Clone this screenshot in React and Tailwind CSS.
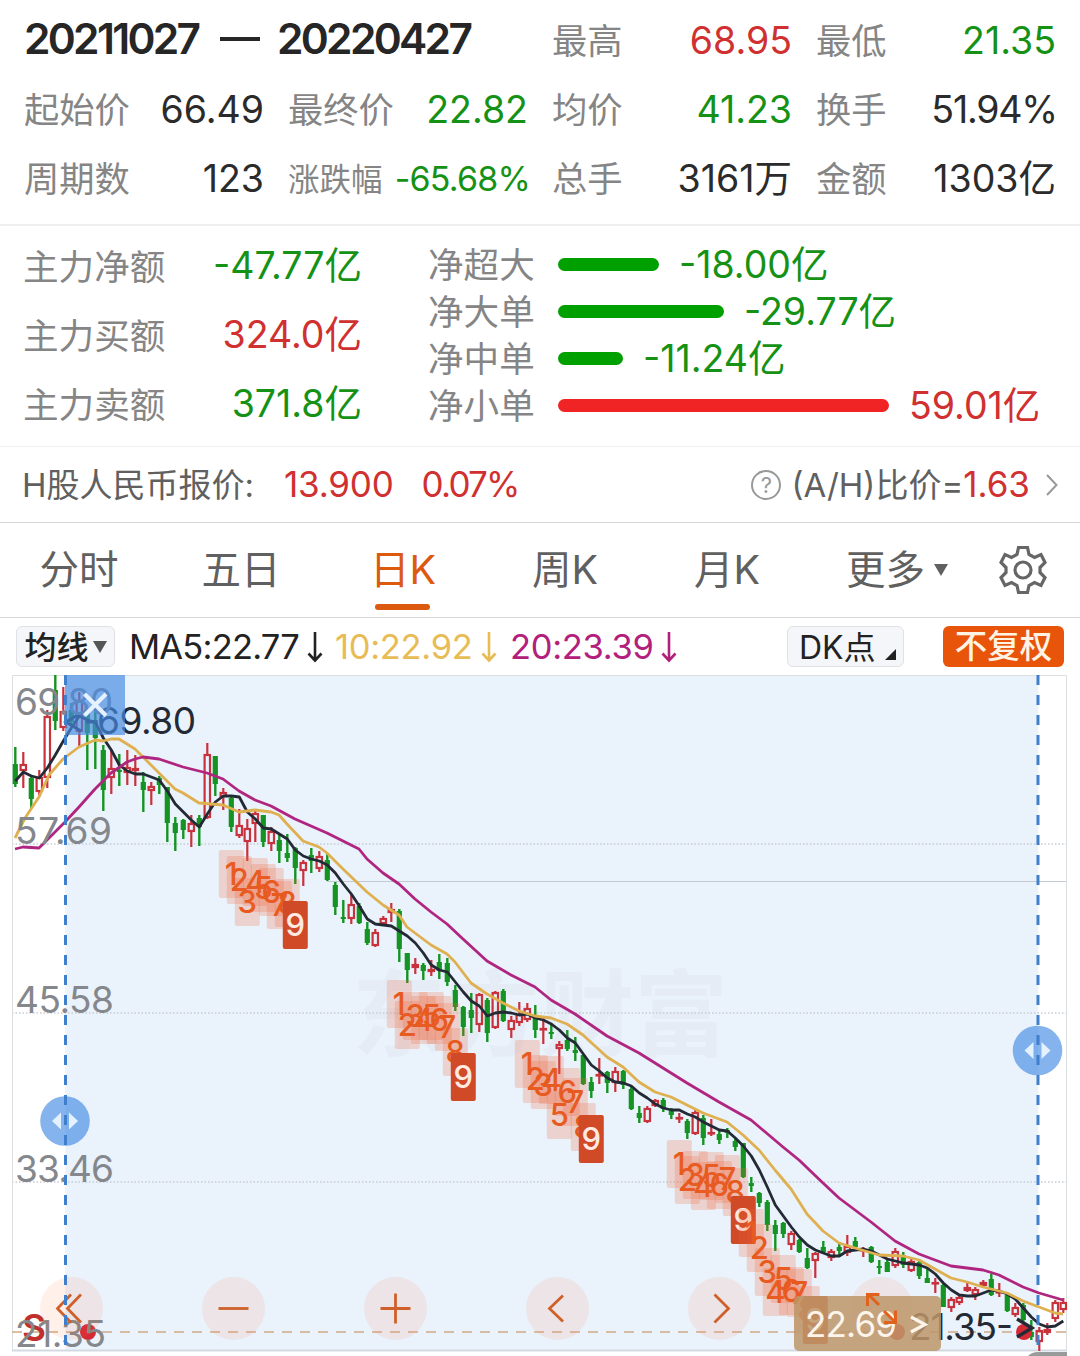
import React from 'react'

const UP = '#c8323c'
const DOWN = '#159423'

const summary = [
  { label: '起始价', value: '66.49', color: 'text-[#2b2b2b]' },
  { label: '最终价', value: '22.82', color: 'text-[#159215]' },
  { label: '均价', value: '41.23', color: 'text-[#159215]' },
  { label: '换手', value: '51.94%', color: 'text-[#2b2b2b] tracking-[-1.2px] -mr-[1px]' },
  { label: '周期数', value: '123', color: 'text-[#2b2b2b]' },
  { label: '涨跌幅', value: '-65.68%', color: 'text-[#159215] tracking-[-0.8px] -mr-[2px]', small: true },
  { label: '总手', value: '3161万', color: 'text-[#2b2b2b]' },
  { label: '金额', value: '1303亿', color: 'text-[#2b2b2b]' },
]

const mainFlow = [
  { label: '主力净额', value: '-47.77亿', color: 'text-[#159215]' },
  { label: '主力买额', value: '324.0亿', color: 'text-[#d03030]' },
  { label: '主力卖额', value: '371.8亿', color: 'text-[#159215]' },
]

const netFlow = [
  { label: '净超大', value: '-18.00亿', width: 101, bar: 'bg-[#00a000]', color: 'text-[#159215]' },
  { label: '净大单', value: '-29.77亿', width: 166, bar: 'bg-[#00a000]', color: 'text-[#159215]' },
  { label: '净中单', value: '-11.24亿', width: 65, bar: 'bg-[#00a000]', color: 'text-[#159215]' },
  { label: '净小单', value: '59.01亿', width: 331, bar: 'bg-[#f02424]', color: 'text-[#d03030]' },
]

const tabs = ['分时', '五日', '日K', '周K', '月K']

// direction (1 up, 0 down), high, low, body top, body bottom
const candles = [
  [0, 747, 787, 764, 784], [1, 752, 788, 764, 771], [0, 777, 808, 778, 799], [1, 770, 797, 777, 792],
  [1, 710, 788, 716, 778], [0, 675, 730, 690, 721], [1, 687, 731, 711, 728], [0, 703, 725, 710, 722],
  [1, 692, 748, 700, 732], [0, 713, 770, 713, 733], [0, 710, 769, 720, 738], [0, 745, 811, 750, 790],
  [1, 751, 794, 768, 778], [0, 754, 786, 770, 772], [1, 750, 785, 767, 773], [1, 755, 786, 768, 771],
  [0, 772, 812, 782, 790], [1, 782, 805, 786, 791], [0, 776, 794, 778, 785], [0, 787, 842, 787, 823],
  [0, 817, 851, 823, 833], [0, 819, 839, 820, 830], [1, 815, 847, 823, 832], [0, 815, 846, 818, 827],
  [1, 743, 819, 754, 818], [0, 756, 796, 756, 784], [1, 788, 810, 792, 797], [0, 795, 832, 798, 827],
  [1, 809, 838, 825, 836], [1, 819, 861, 828, 842], [1, 811, 842, 813, 824], [0, 815, 847, 815, 842],
  [1, 827, 851, 831, 844], [0, 835, 863, 840, 851], [0, 834, 862, 853, 858], [0, 847, 884, 848, 868],
  [1, 860, 886, 862, 871], [0, 848, 873, 855, 861], [1, 851, 872, 856, 869], [0, 854, 881, 860, 880],
  [0, 882, 915, 885, 907], [0, 900, 923, 917, 919], [1, 895, 924, 904, 919], [0, 903, 924, 906, 923],
  [0, 922, 945, 929, 943], [1, 929, 947, 932, 946], [1, 916, 925, 918, 924], [1, 903, 922, 909, 913],
  [0, 909, 962, 911, 949], [0, 953, 983, 953, 970], [1, 958, 974, 964, 968], [0, 963, 980, 965, 971],
  [1, 960, 976, 969, 972], [0, 954, 979, 962, 971], [0, 958, 986, 963, 982], [0, 985, 1011, 990, 1007],
  [0, 1006, 1036, 1007, 1027], [0, 993, 1033, 1010, 1018], [1, 993, 1032, 994, 1025], [0, 998, 1042, 1000, 1033],
  [1, 991, 1029, 992, 1028], [0, 989, 1022, 991, 1021], [1, 1016, 1038, 1020, 1030], [1, 1002, 1026, 1014, 1023],
  [1, 1003, 1022, 1008, 1020], [0, 1005, 1038, 1017, 1030], [1, 1017, 1044, 1028, 1030], [0, 1023, 1039, 1032, 1034],
  [1, 1041, 1074, 1044, 1049], [0, 1030, 1051, 1040, 1049], [0, 1037, 1061, 1050, 1053], [0, 1054, 1085, 1055, 1084],
  [0, 1077, 1098, 1082, 1091], [1, 1058, 1084, 1074, 1076], [0, 1071, 1093, 1072, 1083], [1, 1067, 1092, 1071, 1083],
  [0, 1070, 1089, 1071, 1085], [0, 1087, 1110, 1089, 1109], [0, 1106, 1123, 1113, 1118], [1, 1106, 1123, 1108, 1122],
  [1, 1099, 1107, 1100, 1106], [0, 1098, 1112, 1100, 1109], [0, 1108, 1119, 1111, 1115], [1, 1113, 1123, 1117, 1119],
  [0, 1119, 1139, 1121, 1133], [1, 1110, 1135, 1112, 1134], [0, 1115, 1145, 1118, 1138], [1, 1119, 1136, 1132, 1133],
  [0, 1131, 1144, 1134, 1140], [0, 1128, 1138, 1130, 1133], [0, 1138, 1151, 1141, 1147], [0, 1143, 1178, 1143, 1177],
  [0, 1177, 1192, 1183, 1186], [0, 1192, 1207, 1193, 1203], [0, 1200, 1231, 1202, 1225], [0, 1220, 1251, 1225, 1234],
  [0, 1222, 1238, 1223, 1234], [1, 1231, 1250, 1233, 1245], [0, 1239, 1253, 1240, 1252], [0, 1248, 1269, 1258, 1268],
  [1, 1252, 1278, 1253, 1261], [0, 1241, 1253, 1247, 1252], [1, 1249, 1261, 1251, 1258], [0, 1242, 1257, 1247, 1251],
  [1, 1235, 1256, 1246, 1253], [0, 1237, 1248, 1241, 1247], [1, 1247, 1257, 1249, 1251], [0, 1246, 1263, 1247, 1262],
  [0, 1260, 1274, 1266, 1268], [0, 1258, 1272, 1262, 1272], [1, 1248, 1268, 1251, 1266], [0, 1252, 1268, 1255, 1265],
  [1, 1258, 1272, 1261, 1271], [0, 1261, 1279, 1262, 1276], [0, 1268, 1283, 1278, 1283], [1, 1278, 1293, 1282, 1284],
  [0, 1284, 1307, 1285, 1307], [1, 1297, 1312, 1299, 1308], [1, 1294, 1305, 1297, 1303], [1, 1281, 1292, 1287, 1291],
  [1, 1287, 1300, 1289, 1295], [1, 1280, 1288, 1282, 1286], [0, 1274, 1296, 1279, 1295], [1, 1283, 1297, 1291, 1293],
  [0, 1293, 1312, 1295, 1311], [1, 1303, 1317, 1307, 1315], [0, 1303, 1322, 1305, 1320], [0, 1320, 1340, 1332, 1337],
  [1, 1327, 1351, 1330, 1342], [1, 1323, 1335, 1329, 1333], [1, 1300, 1322, 1302, 1319], [1, 1298, 1313, 1302, 1310],
]

const ma5 = [
  781, 772, 776, 778, 768, 755, 741, 728, 716, 720, 722, 738, 750, 765, 771, 774, 774, 777, 780, 791, 804, 812, 820, 827,
  814, 802, 796, 796, 797, 812, 819, 828, 829, 834, 839, 850, 856, 859, 861, 865, 873, 884, 894, 906, 919, 924, 925, 926,
  931, 936, 943, 953, 965, 970, 972, 982, 992, 1001, 1006, 1016, 1013, 1012, 1013, 1015, 1014, 1018, 1020, 1024, 1030,
  1038, 1043, 1054, 1065, 1071, 1078, 1082, 1083, 1086, 1093, 1098, 1104, 1108, 1110, 1110, 1114, 1117, 1122, 1126, 1130,
  1131, 1138, 1146, 1156, 1170, 1187, 1205, 1216, 1227, 1237, 1245, 1250, 1253, 1256, 1256, 1251, 1250, 1249, 1251, 1255,
  1259, 1261, 1263, 1264, 1265, 1268, 1274, 1283, 1290, 1295, 1296, 1296, 1293, 1290, 1291, 1294, 1299, 1308, 1317, 1324,
  1327, 1326, 1321,
]

const ma10 =
  '15,838 25,818 39,797 49,775 63,759 79,747 95,740 103,741 111,739 119,739 135,749 151,765 175,789 183,793 199,803 223,805 239,812 255,810 271,812 279,815 287,824 303,841 319,847 327,853 343,869 367,892 383,905 399,915 407,927 431,945 447,954 455,962 471,983 487,994 503,1003 519,1011 535,1016 551,1018 567,1024 583,1035 607,1057 623,1067 639,1082 655,1092 671,1097 687,1105 703,1113 727,1122 743,1135 759,1150 775,1170 791,1189 807,1214 823,1231 839,1243 855,1248 879,1255 903,1256 919,1260 935,1269 951,1278 967,1282 983,1287 1007,1293 1023,1301 1039,1307 1055,1313 1063,1314'

const ma20 =
  '15,849 23,847 39,848 47,840 65,822 79,807 95,789 111,773 127,762 135,759 143,757 159,759 183,767 207,773 223,779 239,791 255,800 271,806 295,819 327,833 359,849 367,859 383,873 399,884 415,899 431,912 447,924 463,939 487,961 511,975 535,987 551,1000 575,1014 607,1036 639,1053 663,1068 687,1083 719,1102 751,1120 783,1147 799,1160 823,1183 839,1198 871,1222 895,1241 919,1254 935,1260 951,1266 983,1270 999,1275 1023,1287 1039,1293 1063,1300'

// nine-count sequences: index of the first candle, top of each box
const sequences = [
  { start: 27, tops: [850, 856, 878, 858, 864, 868, 881, 879, 901] },
  { start: 48, tops: [980, 1001, 992, 996, 992, 996, 1003, 1028, 1053] },
  { start: 64, tops: [1040, 1055, 1061, 1056, 1091, 1068, 1078, 1103, 1115] },
  { start: 83, tops: [1140, 1156, 1151, 1162, 1152, 1161, 1155, 1168, 1196] },
  { start: 92, tops: [1209, 1224, 1248, 1268, 1255, 1267, 1269, 1286, 1296] },
]

const xOf = (i) => 15.3 + i * 8

const Candle = ({ index, data }) => {
  const [up, high, low, top, bottom] = data
  const x = xOf(index)
  const height = bottom - top
  if (!up) {
    return (
      <g fill={DOWN}>
        <rect x={x - 1.2} y={high} width="2.4" height={low - high} />
        <rect x={x - 2.6} y={top} width="5.2" height={height} />
      </g>
    )
  }
  return (
    <g stroke={UP} strokeWidth="2.2" fill="none">
      <path d={`M${x} ${high}V${top}M${x} ${bottom}V${low}`} />
      <rect x={x - 2.7} y={top + 1} width="5.4" height={Math.max(height - 2, 0.5)} />
    </g>
  )
}

const Sequence = ({ start, tops }) => (
  <g fontSize="31" textAnchor="middle">
    {tops.map((top, i) => {
      const x = xOf(start + i)
      const last = i === 8
      return (
        <g key={i}>
          <rect x={x - 12.5} y={top} width="25" height="48" rx="2" fill={last ? '#d04a28' : '#f06030'} fillOpacity={last ? 1 : 0.22} />
          <text x={x} y={top + 35} fontWeight={last ? 500 : 450} fill={last ? '#ffe9e0' : '#e65a1e'}>{i + 1}</text>
        </g>
      )
    })}
  </g>
)

const Handle = ({ x, y }) => (
  <g>
    <circle cx={x} cy={y} r="24.8" fill="#4b8fe6" fillOpacity="0.68" />
    <path d={`M${x - 4} ${y - 8.5}v17l-9 -8.5zM${x + 4} ${y - 8.5}v17l9 -8.5z`} fill="#e4f1ff" />
  </g>
)

const buttons = [
  'M71 -14L57.5 0L71 14M81 -14L67.5 0L81 14',
  'M218.5 0H248.5',
  'M380.5 0H410.5M395.5 -15V15',
  'M563 -13L549.5 0L563 13',
  'M714.5 -14L728.5 0L714.5 14',
]

const Chart = () => (
  <svg className="block" width="1080" height="683" viewBox="0 673 1080 683" fontFamily='Inter, "Noto Sans CJK SC", sans-serif' fontWeight="400">
    <rect x="65.3" y="675" width="972.7" height="675" fill="#eaf2fc" />
    <text x="352" y="1049" fontSize="94" fontWeight="700" fill="#e5ecf6" textLength="376">东方财富</text>
    <g stroke="#c6ccd4" strokeWidth="1.5" strokeDasharray="1.5 2">
      <path d="M12 844H1067M12 1013H1067M12 1182H1067" />
    </g>
    <path d="M327 881.5H1067" stroke="#c3c9d1" />
    <path d="M12.5 1350V675.5H1066.5V1350" fill="none" stroke="#dcdfe2" />
    <path d="M12 1350.5H1067" stroke="#d3d9e1" strokeWidth="2" />
    <path d="M12 1332H1067" stroke="#d0ab88" strokeWidth="1.3" strokeDasharray="10 8" />

    {candles.map((c, i) => <Candle key={i} index={i} data={c} />)}

    <g fill="none" strokeWidth="2.8" strokeLinejoin="round">
      <polyline points={ma5.map((y, i) => `${xOf(i)},${y}`).join(' ')} stroke="#232a35" />
      <polyline points={ma10} stroke="#dfb050" />
      <polyline points={ma20} stroke="#b0257f" />
    </g>

    <path d="M81 713L66 722L81 731M86 722H97" fill="none" stroke="#232a35" strokeWidth="3" />
    <text x="97" y="734" fontSize="37" fill="#232a35" textLength="99">69.80</text>

    {sequences.map((s) => <Sequence key={s.start} {...s} />)}

    <text x="22" y="1341" fontSize="37" fontWeight="600" fill="#c0302c">S</text>
    <g fill="#d42a36">
      <circle cx="88" cy="1332" r="8" />
      <circle cx="1024" cy="1332" r="8" />
      <circle cx="897" cy="1332" r="8" />
    </g>
    <text x="909" y="1340" fontSize="37" fill="#232a35" textLength="104">21.35-</text>
    <path d="M1017 1319L1032 1328L1017 1337" fill="none" stroke="#232a35" strokeWidth="3.4" />

    <g fill="#84878c" fontSize="37">
      <text x="15" y="715" textLength="98">69.80</text>
      <text x="15" y="844" textLength="97">57.69</text>
      <text x="15" y="1013" textLength="99">45.58</text>
      <text x="15" y="1182" textLength="99">33.46</text>
      <text x="15" y="1347" textLength="91">21.35</text>
    </g>

    <rect x="65" y="675" width="60" height="60" fill="#468ae2" fillOpacity="0.68" />
    <path d="M84.5 694L106 715.5M106 694L84.5 715.5" stroke="#e6f2ff" strokeWidth="4" />

    <g fill="#ff6a28" fillOpacity="0.1">
      {buttons.map((d, i) => <circle key={d} cx={71.5 + i * 162} cy="1308.5" r="31.5" />)}
      <circle cx="881.5" cy="1308.5" r="31.5" />
    </g>
    {buttons.map((d) => (
      <path key={d} d={d} transform="translate(0 1308.5)" fill="none" stroke="#d0602a" strokeWidth="2.8" />
    ))}

    <Handle x={65} y={1121} />
    <Handle x={1037.5} y={1050.5} />
    <path d="M65.5 675V1350M1038 675V1350" stroke="#3f7fcc" strokeWidth="3" strokeDasharray="10 10" />

    <rect x="794" y="1296" width="147" height="55" rx="5" fill="#bd9668" fillOpacity="0.85" />
    <text x="805" y="1337" fontSize="35" fill="#fdf5ec" textLength="92">22.69</text>
    <path d="M911 1317L925 1324.5L911 1332" fill="none" stroke="#fdf5ec" strokeWidth="3.2" />
    <path d="M879 1305L868 1294M867.5 1306V1294.5H879.5M884 1311L895 1322M895.5 1310.5V1322.5H884" fill="none" stroke="#e0621c" strokeWidth="3" />
    <path d="M1028 1356q4 -4 10 -4H1067V1356z" fill="#999a9c" />
  </svg>
)

const Triangle = ({ className }) => (
  <svg className={className} width="14" height="12" viewBox="0 0 14 12" fill="currentColor"><path d="M0 0H14L7 12z" /></svg>
)

const DownArrow = ({ className }) => (
  <svg className={className} width="16" height="32" viewBox="0 0 16 32" fill="none" stroke="currentColor" strokeWidth="2.6">
    <path d="M8 1V29M1.5 22.5L8 29.5L14.5 22.5" />
  </svg>
)

const SummaryItem = ({ label, value, color, small }) => (
  <div className="flex items-center justify-between whitespace-nowrap">
    <span className={`pt-[3px] text-[#858585] ${small ? 'text-[31.5px]' : 'text-[35.3px]'}`}>{label}</span>
    <span className={`pt-[1px] ${small ? 'text-[34px]' : 'text-[37.5px]'} ${color}`}>{value}</span>
  </div>
)

const App = () => {
  return (
    <div className="w-[1080px] h-[1356px] overflow-hidden bg-white font-[Inter,'Noto_Sans_CJK_SC',sans-serif] text-[37.5px] leading-none">
      <div className="grid grid-cols-4 grid-rows-[69px_69px_69px] gap-x-6 px-6 pt-[6px] h-[224px]">
        <div className="col-span-2 flex items-center text-[42.5px] font-semibold text-[#262626] tracking-[-2.7px] pb-[3px]">
          <span className="w-[196px]">20211027</span>
          <span className="w-[40px] h-[4px] mr-[17px] bg-[#262626]"></span>
          <span>20220427</span>
        </div>
        <SummaryItem label="最高" value="68.95" color="text-[#d03030]" />
        <SummaryItem label="最低" value="21.35" color="text-[#159215]" />
        {summary.map((item) => <SummaryItem key={item.label} {...item} />)}
      </div>

      <div className="flex h-[223px] border-t-2 border-b border-[#f0f0f0] px-6">
        <div className="w-[338px] pt-[5px]">
          {mainFlow.map((item) => (
            <div key={item.label} className="flex items-center justify-between h-[69px]">
              <span className="-ml-[1px] pt-[4px] text-[35.6px] text-[#858585]">{item.label}</span>
              <span className={`pt-[1px] ${item.color}`}>{item.value}</span>
            </div>
          ))}
        </div>
        <div className="ml-[66px] pt-[15px]">
          {netFlow.map((item) => (
            <div key={item.label} className="flex items-center h-[47px] whitespace-nowrap">
              <span className="w-[130px] pt-[3px] text-[35.6px] text-[#858585]">{item.label}</span>
              <span className={`h-[13px] rounded-full ${item.bar}`} style={{ width: item.width }}></span>
              <span className={`ml-[20px] ${item.color}`}>{item.value}</span>
            </div>
          ))}
        </div>
      </div>

      <div className="flex items-center h-[76px] border-b border-[#d8d8d8] px-[22px] text-[33px] text-[#606060]">
        <span className="pt-[2px]">H股人民币报价:</span>
        <span className="ml-[30px] text-[35px] tracking-[-0.2px] text-[#d03030]">13.900</span>
        <span className="ml-[28px] text-[35px] tracking-[-1.8px] text-[#d03030]">0.07%</span>
        <span className="flex items-center justify-center ml-auto w-[30px] h-[30px] rounded-full border-2 border-[#999] text-[22px] text-[#999]">?</span>
        <span className="ml-[10px] pt-[2px]">(A/H)比价=</span>
        <span className="text-[35px] text-[#d03030]">1.63</span>
        <svg className="ml-[16px]" width="12" height="22" viewBox="0 0 12 22" fill="none" stroke="#999" strokeWidth="2"><path d="M1 1L10.5 11L1 21" /></svg>
      </div>

      <div className="flex h-[95px] border-b border-[#d8d8d8] text-[39.5px] text-[#606060]">
        {tabs.map((tab) => (
          <div key={tab} className={`relative flex justify-center w-[162px] pt-[28px] pr-1 ${tab === '日K' ? 'text-[#dc5a10]' : ''}`}>
            {tab}
            {tab === '日K' && <span className="absolute left-[51px] top-[81px] w-[55px] h-[6px] rounded-full bg-[#dc5a10]"></span>}
          </div>
        ))}
        <div className="flex ml-[36px] pt-[28px]">
          更多<Triangle className="mt-[13px] ml-[9px]" />
        </div>
        <svg className="ml-[50px] mt-[22px]" width="50" height="50" viewBox="0 0 50 50" fill="none" stroke="#666" strokeWidth="3.2">
          <path d="M20.5 2.5H29.5L31 9.5L36.5 12.5L43 9.5L47 17.5L42 22.5V27.5L47 32.5L43 40.5L36.5 37.5L31 40.5L29.5 47.5H20.5L19 40.5L13.5 37.5L7 40.5L3 32.5L8 27.5V22.5L3 17.5L7 9.5L13.5 12.5L19 9.5z" />
          <circle cx="25" cy="25" r="8" />
        </svg>
      </div>

      <div className="flex items-center h-[55px] pl-4 pt-[2px] text-[34.5px] whitespace-nowrap text-[#222]">
        <div className="flex items-center justify-center w-[99px] h-[41px] rounded-md border border-[#dfe1e5] bg-[#f5f6f9] text-[32px] font-[450]">
          <span className="pt-[2px]">均线</span><Triangle className="ml-1 text-[#555]" />
        </div>
        <span className="ml-[14px] w-[178px] pt-[2px] tracking-[-0.8px]">MA5:22.77</span>
        <DownArrow />
        <span className="ml-[12px] w-[146px] pt-[2px] tracking-[-0.3px] text-[#e8bc55]">10:22.92</span>
        <DownArrow className="text-[#e8bc55]" />
        <span className="ml-[13px] w-[151px] pt-[2px] tracking-[-0.3px] text-[#b3207c]">20:23.39</span>
        <DownArrow className="text-[#b3207c]" />
        <div className="flex items-center ml-auto w-[117px] h-[41px] pl-[11px] rounded-md border border-[#dfe1e5] bg-[#f5f6f9] text-[32px]">
          <span className="pt-[2px]">DK点</span>
          <svg className="ml-[9px] mt-4" width="11" height="11" viewBox="0 0 11 11" fill="#222"><path d="M11 0V11H0z" /></svg>
        </div>
        <div className="flex items-center justify-center ml-[39px] mr-4 w-[121px] h-[41px] pt-[2px] rounded-md bg-[#e8540a] text-[32.5px] font-[450] text-[#fff3e4]">不复权</div>
      </div>

      <Chart />
    </div>
  )
}

export default App
